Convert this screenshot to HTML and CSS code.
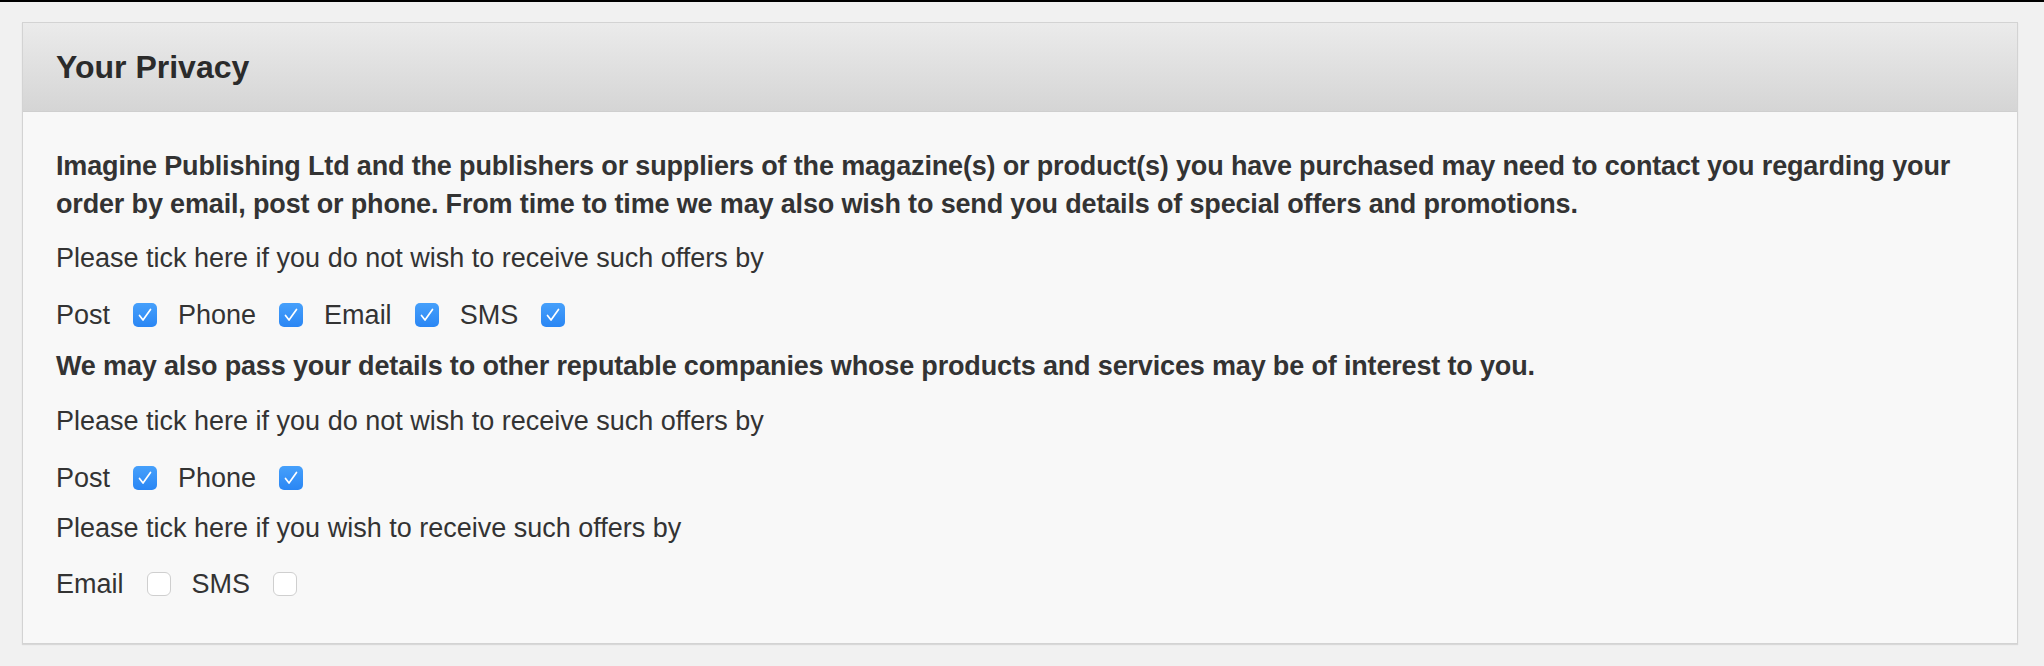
FILE: index.html
```html
<!DOCTYPE html>
<html lang="en">
<head>
<meta charset="utf-8">
<title>Your Privacy</title>
<link rel="stylesheet" href="styles.css">
</head>
<body>
<div class="topbar"></div>
<section class="panel">
  <header class="panel-head"><h2 class="panel-title">Your Privacy</h2></header>
  <div class="panel-body">
    <p class="lead">Imagine Publishing Ltd and the publishers or suppliers of the magazine(s) or product(s) you have purchased may need to contact you regarding your order by email, post or phone. From time to time we may also wish to send you details of special offers and promotions.</p>
    <p class="note">Please tick here if you do not wish to receive such offers by</p>
    <div class="opts opts-a">
      <label class="opt"><span class="opt-label">Post</span><span class="box on"><svg viewBox="0 0 24 24"><path d="M6.5 12.5 L10 17 L17.5 6.5"/></svg></span></label>
      <label class="opt"><span class="opt-label">Phone</span><span class="box on"><svg viewBox="0 0 24 24"><path d="M6.5 12.5 L10 17 L17.5 6.5"/></svg></span></label>
      <label class="opt"><span class="opt-label">Email</span><span class="box on"><svg viewBox="0 0 24 24"><path d="M6.5 12.5 L10 17 L17.5 6.5"/></svg></span></label>
      <label class="opt"><span class="opt-label">SMS</span><span class="box on"><svg viewBox="0 0 24 24"><path d="M6.5 12.5 L10 17 L17.5 6.5"/></svg></span></label>
    </div>
    <p class="lead lead-2">We may also pass your details to other reputable companies whose products and services may be of interest to you.</p>
    <p class="note">Please tick here if you do not wish to receive such offers by</p>
    <div class="opts opts-b">
      <label class="opt"><span class="opt-label">Post</span><span class="box on"><svg viewBox="0 0 24 24"><path d="M6.5 12.5 L10 17 L17.5 6.5"/></svg></span></label>
      <label class="opt"><span class="opt-label">Phone</span><span class="box on"><svg viewBox="0 0 24 24"><path d="M6.5 12.5 L10 17 L17.5 6.5"/></svg></span></label>
    </div>
    <p class="note note-tight">Please tick here if you wish to receive such offers by</p>
    <div class="opts opts-c">
      <label class="opt"><span class="opt-label">Email</span><span class="box off"></span></label>
      <label class="opt"><span class="opt-label">SMS</span><span class="box off"></span></label>
    </div>
  </div>
</section>
</body>
</html>
```

FILE: styles.css
```css
html, body {
  margin: 0;
  padding: 0;
}
body {
  background: #f1f1f1;
  font-family: "Liberation Sans", Arial, Helvetica, sans-serif;
  color: #333;
  width: 2044px;
  height: 666px;
  overflow: hidden;
}
.topbar {
  height: 2px;
  background: #000;
}
.panel {
  margin: 20px 26px 0 22px;
  border: 1px solid #d3d3d3;
  box-shadow: 0 1px 1px rgba(0, 0, 0, 0.10);
  background: #f8f8f8;
}
.panel-head {
  height: 88px;
  display: flex;
  align-items: center;
  padding: 0 33px;
  background: linear-gradient(#ebebeb, #d5d5d5);
  border-bottom: 1px solid #cfcfcf;
}
.panel-title {
  margin: 0;
  font-size: 32px;
  font-weight: bold;
  color: #2b2b2b;
}
.panel-body {
  padding: 35px 33px 27px;
}
.lead {
  margin: 0 0 16px;
  font-size: 27px;
  line-height: 38px;
  font-weight: bold;
  color: #333;
  letter-spacing: -0.16px;
}
.lead-2 {
  margin-bottom: 17px;
}
.note {
  margin: 0 0 19px;
  font-size: 27px;
  line-height: 38px;
  color: #333;
}
.note-tight {
  margin-bottom: 18px;
}
.opts {
  display: flex;
  align-items: center;
  height: 38px;
  font-size: 27px;
  line-height: 38px;
  margin-bottom: 13px;
}
.opts-b {
  margin-bottom: 12px;
}
.opt {
  display: flex;
  align-items: center;
}
.opt-label {
  margin-right: 23px;
}
.box {
  width: 24px;
  height: 24px;
  box-sizing: border-box;
  border-radius: 5px;
  margin-right: 21px;
  display: flex;
  align-items: center;
  justify-content: center;
}
.box.on {
  background: linear-gradient(#46a0fb, #2a86f4);
}
.box.on svg {
  width: 24px;
  height: 24px;
}
.box.on path {
  fill: none;
  stroke: #fff;
  stroke-width: 1.7;
  stroke-linecap: round;
  stroke-linejoin: round;
}
.box.off {
  background: #fff;
  border: 1.5px solid #cfcfcf;
  border-radius: 6px;
}
```
